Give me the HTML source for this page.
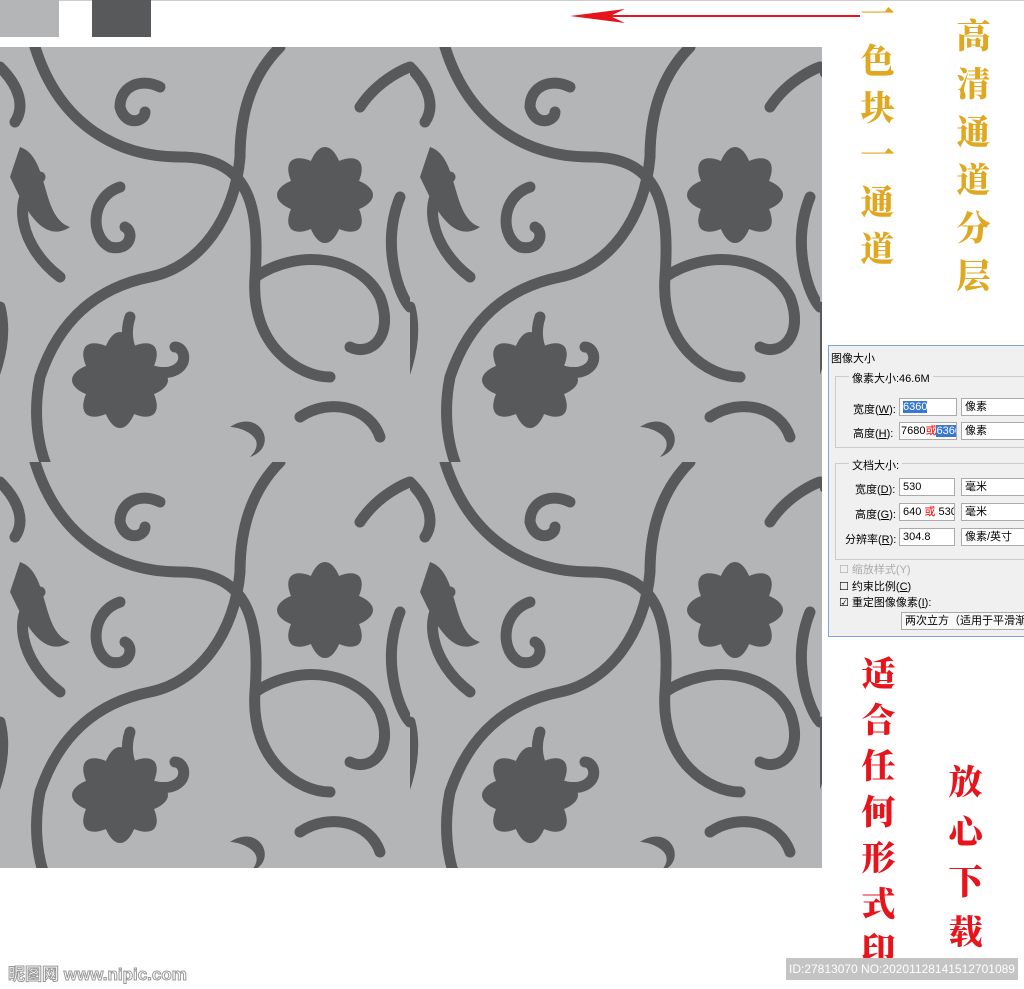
<!DOCTYPE html>
<html><head><meta charset="utf-8"><style>
body{margin:0;width:1024px;height:989px;background:#fff;position:relative;overflow:hidden;font-family:"Liberation Sans","Noto Sans CJK SC",sans-serif}
.a{position:absolute}
.v{position:absolute;writing-mode:vertical-rl;font-family:"Noto Serif CJK SC",serif;font-weight:900;font-size:34px;line-height:1}
.dlg{position:absolute;left:828px;top:345px;width:200px;height:290px;background:#f0f0f0;border:1px solid #7aa7d6;font-size:11px;color:#000;overflow:hidden}
.dlg div{white-space:nowrap}
.box{position:absolute;background:#fff;border:1px solid #aaa;height:18px;line-height:16px;padding-left:3px;box-sizing:border-box;overflow:hidden}
.grp{position:absolute;border:1px solid #ccc}
</style></head><body>
<div class="a" style="left:0;top:0;width:1024px;height:1px;background:#ccc"></div>
<div class="a" style="left:0;top:0;width:59px;height:37px;background:#b4b5b7"></div>
<div class="a" style="left:92px;top:0;width:59px;height:37px;background:#58595a"></div>
<svg class="a" style="left:565px;top:6px" width="300" height="20"><line x1="30" y1="10" x2="295" y2="10" stroke="#e8141c" stroke-width="2"/><path d="M5 10 L60 3 L45 10 L60 17Z" fill="#e8141c"/></svg>
<svg class="a" style="left:0;top:47px" width="822" height="821">
<defs><pattern id="p" x="0" y="0" width="410" height="415" patternUnits="userSpaceOnUse">
<rect width="410" height="415" fill="#b4b5b7"/>
<g fill="none" stroke="#58595a" stroke-width="11" stroke-linecap="round">
<path d="M35 0 C60 80 120 110 180 110 C250 110 260 160 255 230 C250 300 300 330 330 330"/>
<path d="M280 0 C250 30 240 70 240 110 C235 170 200 220 150 230 C100 240 60 270 40 330 C30 380 45 415 45 415"/>
<path d="M120 140 C90 150 90 190 110 200 C130 205 135 185 125 180"/>
<path d="M255 230 C300 200 360 210 380 250 C395 290 370 310 350 300"/>
<path d="M130 270 C120 300 140 330 170 325 C190 320 185 300 175 300"/>
<path d="M360 60 C380 30 410 20 410 20"/>
<path d="M0 20 C20 40 25 60 15 75"/>
<path d="M60 230 C20 200 10 150 40 130"/>
<path d="M400 150 C380 200 400 250 410 260"/>
<path d="M0 260 C10 300 -10 340 -20 360"/>
<path d="M160 40 C140 30 120 40 120 60 C125 80 145 75 145 65"/>
<path d="M300 370 C330 350 370 360 380 390"/>
</g>
<g fill="#58595a">
<g transform="translate(325,148)"><ellipse rx="20" ry="48"/><ellipse rx="20" ry="48" transform="rotate(45)"/><ellipse rx="20" ry="48" transform="rotate(90)"/><ellipse rx="20" ry="48" transform="rotate(135)"/><circle r="30"/></g>
<g transform="translate(120,333)"><ellipse rx="20" ry="48"/><ellipse rx="20" ry="48" transform="rotate(45)"/><ellipse rx="20" ry="48" transform="rotate(90)"/><ellipse rx="20" ry="48" transform="rotate(135)"/><circle r="30"/></g>
<path d="M20 100 C50 110 40 170 70 180 C40 200 20 150 10 130Z"/>
<path d="M230 380 C260 360 280 400 250 410 C270 390 240 380 230 380Z"/>
</g>
</pattern></defs>
<rect width="822" height="821" fill="url(#p)"/>
</svg>
<div class="v" style="left:860px;top:-4px;color:#e0a820;letter-spacing:13px">一色块一通道</div>
<div class="v" style="left:956px;top:18px;color:#e0a820;letter-spacing:14px">高清通道分层</div>
<div class="v" style="left:861px;top:656px;color:#e8141c;letter-spacing:12px">适合任何形式印</div>
<div class="v" style="left:948px;top:764px;color:#e8141c;letter-spacing:16px">放心下载</div>
<div class="dlg">
<div class="a" style="left:2px;top:4px">图像大小</div>
<div class="grp" style="left:6px;top:30px;width:200px;height:70px"></div>
<div class="a" style="left:20px;top:24px;background:#f0f0f0;padding:0 3px">像素大小:46.6M</div>
<div class="a" style="left:24px;top:55px">宽度(<u>W</u>):</div><div class="box" style="left:70px;top:52px;width:58px"><span style="background:#3878d0;color:#fff">6360</span></div><div class="box" style="left:132px;top:52px;width:70px">像素</div>
<div class="a" style="left:24px;top:79px">高度(<u>H</u>):</div><div class="box" style="left:70px;top:76px;width:58px;padding-left:1px">7680<span style="color:red">或</span><span style="background:#3878d0;color:#fff">6360</span></div><div class="box" style="left:132px;top:76px;width:70px">像素</div>
<div class="grp" style="left:6px;top:117px;width:200px;height:95px"></div>
<div class="a" style="left:20px;top:111px;background:#f0f0f0;padding:0 3px">文档大小:</div>
<div class="a" style="left:26px;top:135px">宽度(<u>D</u>):</div><div class="box" style="left:70px;top:132px;width:56px">530</div><div class="box" style="left:132px;top:132px;width:70px">毫米</div>
<div class="a" style="left:26px;top:160px">高度(<u>G</u>):</div><div class="box" style="left:70px;top:157px;width:56px">640 <span style="color:red">或</span> 530</div><div class="box" style="left:132px;top:157px;width:70px">毫米</div>
<div class="a" style="left:16px;top:185px">分辨率(<u>R</u>):</div><div class="box" style="left:70px;top:182px;width:56px">304.8</div><div class="box" style="left:132px;top:182px;width:70px">像素/英寸</div>
<div class="a" style="left:10px;top:215px;color:#aaa">☐ 缩放样式(Y)</div>
<div class="a" style="left:10px;top:232px">☐ 约束比例(<u>C</u>)</div>
<div class="a" style="left:10px;top:248px">☑ 重定图像像素(<u>I</u>):</div>
<div class="box" style="left:72px;top:266px;width:130px;height:18px;background:#f8f8f8">两次立方（适用于平滑渐变</div>
</div>
<div class="a" style="left:8px;top:960px;font-size:17px;font-weight:bold;color:#fff;-webkit-text-stroke:1px #999">昵图网 www.nipic.com</div>
<div class="a" style="left:786px;top:958px;width:232px;height:22px;background:#c4c4c4;color:#fff;font-size:12px;line-height:22px;text-align:center">ID:27813070 NO:20201128141512701089</div>
</body></html>
